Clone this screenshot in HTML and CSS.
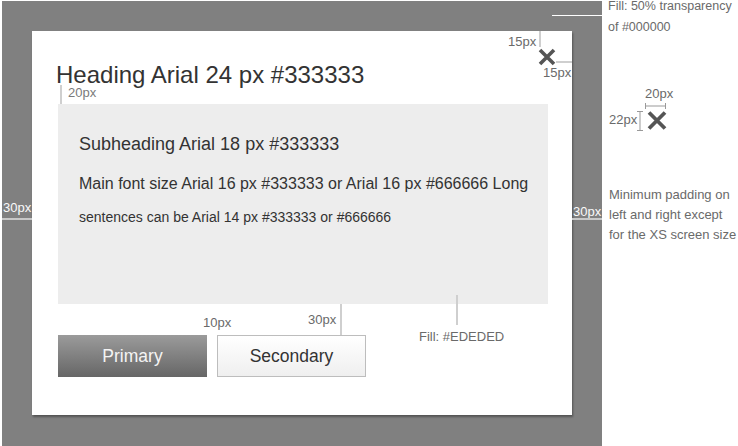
FILE: index.html
```html
<!DOCTYPE html>
<html>
<head>
<meta charset="utf-8">
<link rel="stylesheet" href="styles.css">
</head>
<body>
<div class="canvas">
  <div class="backdrop">
    <div class="modal">
      <h1 class="heading">Heading Arial 24 px #333333</h1>
      <div class="panel">
        <h2 class="subheading">Subheading Arial 18 px #333333</h2>
        <p class="main-text">Main font size Arial 16 px #333333 or Arial 16 px #666666 Long</p>
        <p class="small-text">sentences can be Arial 14 px #333333 or #666666</p>
      </div>
      <div class="actions">
        <button class="btn btn-primary">Primary</button>
        <button class="btn btn-secondary">Secondary</button>
      </div>

      <svg class="close" width="18" height="18" viewBox="0 0 18 18"><path d="M2 2 L16 16 M16 2 L2 16" stroke="#555" stroke-width="3.6" stroke-linecap="butt"/></svg>

      <span class="note note-15a">15px</span>
      <span class="vline vline-close"></span>
      <span class="hline hline-close"></span>
      <span class="note note-15b">15px</span>
      <span class="note note-20">20px</span>
      <span class="vline vline-head"></span>
      <span class="note note-10">10px</span>
      <span class="note note-30">30px</span>
      <span class="vline vline-btn"></span>
      <span class="note note-fill">Fill: #EDEDED</span>
      <span class="vline vline-fill"></span>
    </div>
  </div>

  <span class="white-line top-line"></span>
  <span class="white-note pad-left">30px</span>
  <span class="white-line pad-left-line"></span>
  <span class="white-note pad-right">30px</span>
  <span class="white-line pad-right-line"></span>

  <p class="side-note side-fill"><span class="fill-l1">Fill: 50% transparency</span><span class="fill-l2">of #000000</span></p>
  <span class="side-note side-20">20px</span>
  <svg class="dim-h" width="21" height="6" viewBox="0 0 21 6"><path d="M0.5 0 V6 M20.5 0 V6 M0 3 H21" stroke="#999" stroke-width="1"/></svg>
  <span class="side-note side-22">22px</span>
  <svg class="dim-v" width="6" height="20" viewBox="0 0 6 20"><path d="M0 0.5 H6 M0 19.5 H6 M3 0 V20" stroke="#999" stroke-width="1"/></svg>
  <svg class="x-sample" width="20" height="19" viewBox="0 0 20 19"><path d="M2 1.5 L18 17.5 M18 1.5 L2 17.5" stroke="#555" stroke-width="3.8"/></svg>
  <p class="side-note side-min">Minimum padding on<br>left and right except<br>for the XS screen size</p>
</div>
</body>
</html>
```

FILE: styles.css
```css
* { box-sizing: border-box; }
html, body { margin: 0; padding: 0; background: #fff; }
body { font-family: "Liberation Sans", Arial, sans-serif; }

.canvas {
  position: relative;
  width: 738px;
  height: 446px;
  overflow: hidden;
}

.backdrop {
  margin: 1px 0 0 2px;
  width: 600px;
  height: 445px;
  padding: 30px;
  background: #808080;
}

.modal {
  position: relative;
  width: 540px;
  height: 384px;
  background: #fff;
  padding: 33px 24px 0 26px;
  box-shadow: 1px 2px 2px rgba(0, 0, 0, 0.35);
}

.heading {
  margin: 0 0 0 -2px;
  font-size: 24px;
  line-height: 21px;
  font-weight: normal;
  color: #333;
  white-space: nowrap;
}

.panel {
  margin-top: 19px;
  height: 200px;
  background: #ededed;
  padding: 30px 10px 0 21px;
  color: #333;
  white-space: nowrap;
}

.subheading {
  margin: 0;
  font-size: 18px;
  line-height: 21px;
  font-weight: normal;
}

.main-text {
  margin: 20px 0 0;
  font-size: 16px;
  line-height: 18px;
}

.small-text {
  margin: 16px 0 0;
  font-size: 14px;
  line-height: 16px;
}

.actions {
  display: flex;
  gap: 10px;
  margin-top: 31px;
}

.btn {
  width: 149px;
  height: 42px;
  font-family: "Liberation Sans", Arial, sans-serif;
  font-size: 17.5px;
  padding: 0;
  border-radius: 0;
  cursor: pointer;
}

.btn-primary {
  border: none;
  color: #f4f4f4;
  background: linear-gradient(#9b9b9b, #666);
}

.btn-secondary {
  border: 1px solid #bdbdbd;
  color: #333;
  background: linear-gradient(#fff, #efefef);
}

.close { position: absolute; left: 506px; top: 17px; }

.note {
  position: absolute;
  font-size: 13px;
  line-height: 15px;
  color: #6a6a6a;
  white-space: nowrap;
}
.note-15a { left: 476px; top: 3px; }
.note-15b { left: 511px; top: 34px; }
.note-20 { left: 36px; top: 56px; line-height: 12px; color: #7a7a7a; }
.note-10 { left: 171px; top: 284px; }
.note-30 { left: 276px; top: 281px; }
.note-fill { left: 387px; top: 298px; }

.vline, .hline {
  position: absolute;
  background: #cfcfcf;
}
.vline { width: 2px; }
.hline { height: 2px; }
.vline-close { left: 507px; top: 0; height: 16px; }
.hline-close { left: 524px; top: 30px; width: 16px; }
.vline-head { left: 28px; top: 54px; height: 19px; }
.vline-btn { left: 308px; top: 273px; height: 31px; }
.vline-fill { left: 424px; top: 264px; height: 30px; }

.white-line {
  position: absolute;
  background: #e6e6e6;
}
.top-line { left: 552px; top: 15px; width: 50px; height: 1px; background: #fff; }
.pad-left-line { left: 2px; top: 218px; width: 30px; height: 2px; background: #c8c8c8; }
.pad-right-line { left: 572px; top: 218px; width: 30px; height: 2px; background: #c8c8c8; }

.white-note {
  position: absolute;
  font-size: 13px;
  line-height: 15px;
  color: #fafafa;
}
.pad-left { left: 3px; top: 200px; }
.pad-right { left: 573px; top: 204px; }

.side-note {
  position: absolute;
  margin: 0;
  font-size: 13px;
  color: #6a6a6a;
  white-space: nowrap;
}
.side-fill { left: 608px; top: 0; font-size: 12.5px; }
.fill-l1 { display: block; line-height: 13px; }
.fill-l2 { display: block; line-height: 21px; margin-top: 4px; }
.side-min { left: 609px; top: 185px; line-height: 20px; }
.side-20 { left: 645px; top: 86px; line-height: 15px; }
.side-22 { left: 609px; top: 112px; line-height: 15px; }
.dim-h { position: absolute; left: 645px; top: 103px; }
.dim-v { position: absolute; left: 637px; top: 111px; }
.x-sample { position: absolute; left: 647px; top: 111px; }
```
